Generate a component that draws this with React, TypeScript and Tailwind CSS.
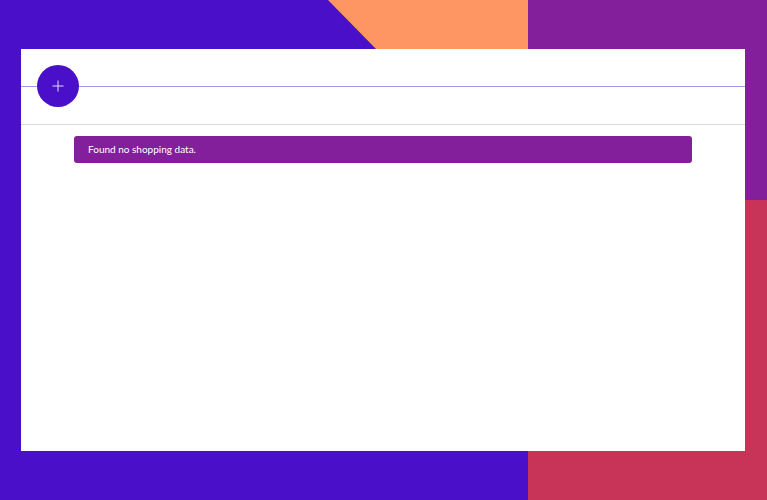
export default function App() {
  return (
    <div className="relative h-[500px] w-[767px] overflow-hidden" style={{ fontFamily: '"Open Sans", "Noto Sans", sans-serif' }}>
      <div className="absolute inset-0 grid grid-cols-[528px_1fr]">
        <div className="relative bg-[#4a0fc8]">
          <div className="absolute inset-0 bg-[#fd9663] [clip-path:polygon(328px_0,528px_0,528px_204px)]" />
        </div>
        <div className="flex flex-col">
          <div className="h-[200px] bg-[#841f9c]" />
          <div className="flex-1 bg-[#c83358]" />
        </div>
      </div>
      <div className="relative pl-[21px] pt-[49px]">
        <div className="flex h-[402px] w-[724px] flex-col bg-white">
          <div className="relative h-[76px] border-b border-[#d8d8df]">
            <div className="absolute left-0 right-0 top-[37px] h-px bg-[#a497ef]" />
            <div className="absolute left-[16px] top-[16px] flex h-[42px] w-[42px] items-center justify-center rounded-full bg-[#4a0fc8]">
              <svg width="12" height="12" viewBox="0 0 12 12">
                <path d="M6 0.5V11.5M0.5 6H11.5" stroke="#e4dcff" strokeWidth="1" />
              </svg>
            </div>
          </div>
          <div className="px-[53px] pt-[11px]">
            <div className="flex h-[27px] items-center rounded-[3px] bg-[#841f9c] px-[14px] font-['Lato'] text-[10px] text-white">
              Found no shopping data.
            </div>
          </div>
        </div>
      </div>
    </div>
  );
}
